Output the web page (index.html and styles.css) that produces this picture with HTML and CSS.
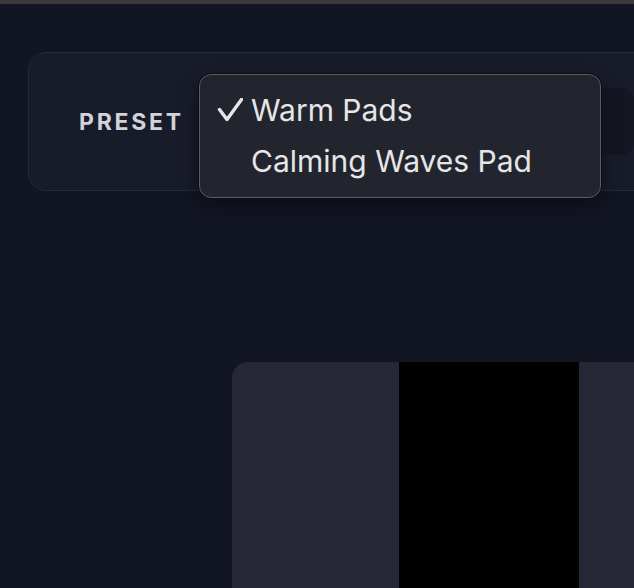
FILE: index.html
```html
<!DOCTYPE html>
<html>
<head>
<meta charset="utf-8">
<link rel="stylesheet" href="styles.css">
</head>
<body>
<div class="topbar"></div>
<main class="page">
  <section class="card">
    <span class="label">PRESET</span>
    <div class="select"></div>
    <div class="menu">
      <div class="item">
        <svg class="check" width="26" height="24" viewBox="0 0 26 24"><polyline points="2.5,11.5 10,21.5 24.5,1.5" fill="none" stroke="#e6e6e8" stroke-width="3.4" stroke-linecap="round" stroke-linejoin="round"/></svg>
        <span>Warm Pads</span>
      </div>
      <div class="item">
        <span class="spacer"></span>
        <span>Calming Waves Pad</span>
      </div>
    </div>
  </section>
  <section class="stage">
    <div class="panel"></div>
    <div class="video"></div>
    <div class="panel rest"></div>
  </section>
</main>
</body>
</html>
```
FILE: styles.css
```css
html, body {
  margin: 0;
  padding: 0;
  background: #121522;
  overflow: hidden;
  width: 634px;
  height: 588px;
  font-family: Inter, "Noto Sans", sans-serif;
}
.topbar {
  height: 4px;
  background: #3a3a3c;
}
.page {
  padding: 48px 0 0 28px;
  overflow: hidden;
}
.card {
  position: relative;
  box-sizing: border-box;
  width: 660px;
  height: 139px;
  background: #181b29;
  border: 1.5px solid #252938;
  border-radius: 18px;
  display: flex;
  align-items: center;
  padding-left: 50px;
  gap: 30px;
}
.label {
  font-size: 23px;
  font-weight: 700;
  letter-spacing: 0.12em;
  color: #d2d3d8;
}
.select {
  width: 420px;
  height: 67px;
  background: #141722;
  border-radius: 12px;
}
.menu {
  position: absolute;
  left: 170px;
  top: 20.5px;
  box-sizing: border-box;
  width: 402px;
  height: 124px;
  background: #23252e;
  border: 1.5px solid #5b5d64;
  border-radius: 12px;
  box-shadow: 0 0 0 1px #0b0c10, 0 8px 20px rgba(0,0,0,0.35);
  padding: 10px 0 0 17px;
  color: #e6e6e8;
  font-size: 30px;
}
.item {
  display: flex;
  align-items: center;
  height: 51px;
  gap: 8px;
}
.check, .spacer {
  width: 26px;
  height: 24px;
  flex: none;
}
.stage {
  display: flex;
  margin: 171px 0 0 204px;
  height: 240px;
  width: 430px;
}
.panel {
  width: 167px;
  background: #262836;
  border-radius: 16px 0 0 0;
}
.video {
  width: 180px;
  background: #000;
}
.panel.rest {
  flex: 1;
  border-radius: 0;
}
```
